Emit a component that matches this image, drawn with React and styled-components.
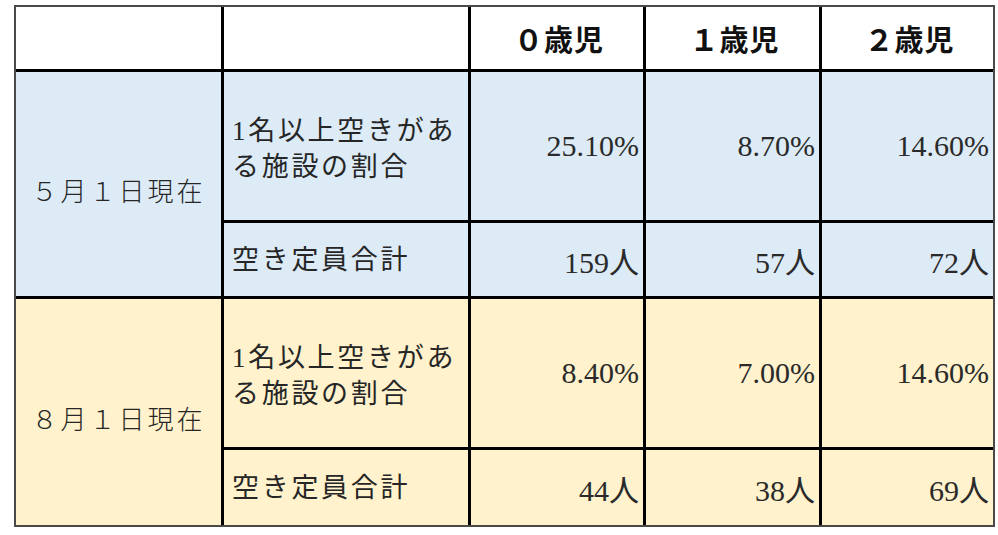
import React from 'react';
import styled, { createGlobalStyle } from 'styled-components';

const serifStack = `"Liberation Serif", "Times New Roman", serif, "Noto Sans CJK JP"`;

const GlobalStyle = createGlobalStyle`
  html, body {
    margin: 0;
    padding: 0;
    background: #fff;
  }
  body {
    font-family: ${serifStack};
    color: #222;
  }
`;

const Page = styled.div`
  width: 998px;
  height: 535px;
  padding: 5px 0 0 14px;
  box-sizing: border-box;
`;

const Grid = styled.div`
  display: grid;
  grid-template-columns: 208px 247px 175px 176px 171px;
  grid-template-rows: 65px 151px 76px 151px 75px;
  width: max-content;
  border: 2px solid #4a4a4a;
  background: #fff;
`;

const Cell = styled.div`
  box-sizing: border-box;
  display: flex;
  align-items: center;
  justify-content: ${props =>
    props.$align === 'left' ? 'flex-start' : props.$align === 'right' ? 'flex-end' : 'center'};
  background: ${props => props.$bg || '#fff'};
  border-right: ${props => (props.$lastCol ? 'none' : '3px solid #000')};
  border-bottom: ${props => (props.$lastRow ? 'none' : '3px solid #000')};
  grid-row: ${props => (props.$span ? `span ${props.$span}` : 'auto')};
  min-width: 0;
  overflow: hidden;
`;

const HeadText = styled.span`
  font-family: "Noto Sans CJK JP", "Liberation Sans", sans-serif;
  font-weight: 700;
  font-size: 29px;
  letter-spacing: 1px;
  color: #111;
  padding-left: 4px;
`;

const DateText = styled.span`
  font-family: "Noto Sans CJK JP", sans-serif;
  font-weight: 300;
  font-size: 26px;
  letter-spacing: 3px;
  color: #262626;
  padding-top: 10px;
`;

const LabelText = styled.span`
  font-family: ${serifStack};
  font-size: 27px;
  line-height: 36px;
  letter-spacing: 2.7px;
  color: #262626;
  padding: ${props => (props.$shift ? '6px 0 0 8px' : '0 0 0 8px')};
`;

const ValueText = styled.span`
  font-family: ${serifStack};
  font-size: 30px;
  color: #2a2a2a;
  padding-right: 4px;
`;

const ages = ['０歳児', '１歳児', '２歳児'];

const groups = [
  {
    date: '５月１日現在',
    bg: '#ddebf7',
    ratio: ['25.10%', '8.70%', '14.60%'],
    seats: ['159人', '57人', '72人'],
  },
  {
    date: '８月１日現在',
    bg: '#fff2cc',
    ratio: ['8.40%', '7.00%', '14.60%'],
    seats: ['44人', '38人', '69人'],
  },
];

const App = () => (
  <>
    <GlobalStyle />
    <Page>
      <Grid>
        <Cell />
        <Cell />
        {ages.map((age, i) => (
          <Cell key={age} $lastCol={i === ages.length - 1}>
            <HeadText>{age}</HeadText>
          </Cell>
        ))}

        {groups.map((g, gi) => {
          const lastGroup = gi === groups.length - 1;
          return (
            <React.Fragment key={g.date}>
              <Cell $bg={g.bg} $span={2} $lastRow={lastGroup}>
                <DateText>{g.date}</DateText>
              </Cell>
              <Cell $bg={g.bg} $align="left">
                <LabelText $shift>
                  1名以上空きがあ
                  <br />
                  る施設の割合
                </LabelText>
              </Cell>
              {g.ratio.map((v, i) => (
                <Cell key={`r${i}`} $bg={g.bg} $align="right" $lastCol={i === 2}>
                  <ValueText>{v}</ValueText>
                </Cell>
              ))}
              <Cell $bg={g.bg} $align="left" $lastRow={lastGroup}>
                <LabelText>空き定員合計</LabelText>
              </Cell>
              {g.seats.map((v, i) => (
                <Cell
                  key={`s${i}`}
                  $bg={g.bg}
                  $align="right"
                  $lastCol={i === 2}
                  $lastRow={lastGroup}>
                  <ValueText>{v}</ValueText>
                </Cell>
              ))}
            </React.Fragment>
          );
        })}
      </Grid>
    </Page>
  </>
);

export default App;
